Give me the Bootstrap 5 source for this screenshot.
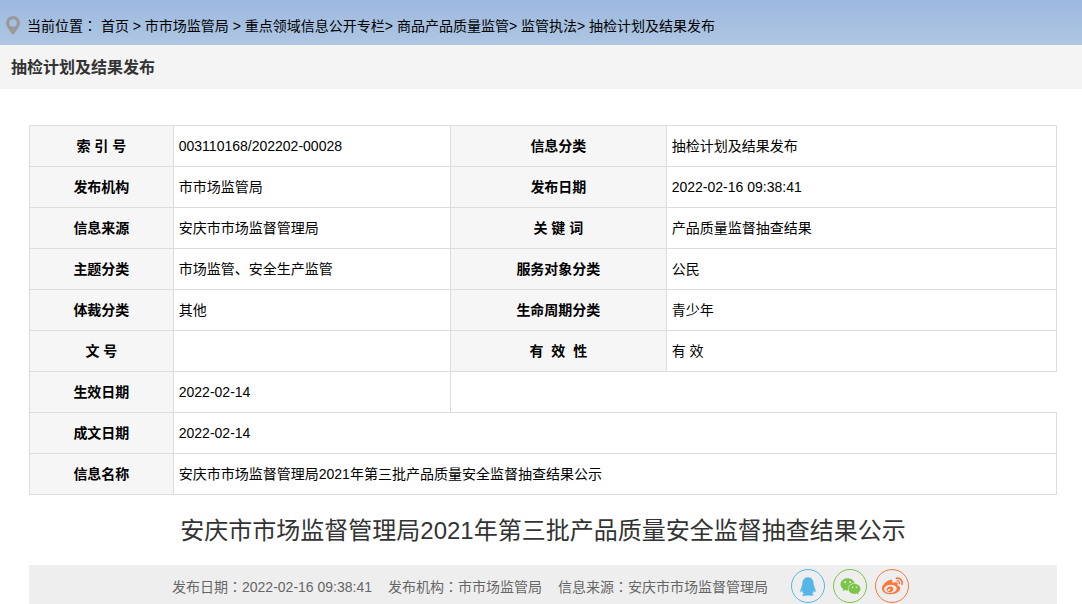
<!DOCTYPE html>
<html lang="zh-CN">
<head>
<meta charset="utf-8">
<meta name="viewport" content="width=device-width, initial-scale=1">
<title>抽检计划及结果发布</title>
<link href="https://cdn.jsdelivr.net/npm/bootstrap@5.3.0/dist/css/bootstrap.min.css" rel="stylesheet">
<style>
  body { font: 14px/24px "Liberation Sans", "Noto Sans CJK SC", sans-serif; color: #000; background: #fff; }
  a { color: inherit; text-decoration: none; }
  a:hover { text-decoration: underline; }
  .crumb-bar { min-height: 45px; padding: 5px 6px 0; gap: 7px; background: linear-gradient(#9db9df, #aec6e2); }
  .section-bar { min-height: 44px; padding: 2px 11px 0; background: #f4f4f4; }
  .section-bar h1 { font-size: 16px; line-height: 24px; color: #333; }
  .mid-colon { font-family: "Noto Sans CJK TC", sans-serif; }
  main { padding: 36px 25px 0 29px; }
  .info-table { table-layout: fixed; border-collapse: collapse; }
  .info-table th, .info-table td { height: 41px; padding: 0 5px; border: 1px solid #ddd; line-height: 24px; }
  .info-table th { background: #f6f6f6; text-align: center; }
  .info-table td.no-edge { border-right: 0; }
  .col-a { width: 14%; } .col-b { width: 27%; } .col-c { width: 21%; } .col-d { width: 38%; }
  .article-title { font-size: 24px; line-height: 36px; color: #333; margin: 18px 0 16px; }
  .meta-bar { background: #eee; color: #666; padding: 4px 5px 1px 0; column-gap: 23px; }
  .meta-list { column-gap: 16px; }
  .share-btn { width: 34px; height: 34px; border: 1px solid; }
  .share-btn svg { fill: currentColor; }
  .qq { color: #56b6e7; } .wechat { color: #7bc549; } .weibo { color: #ff763b; }
</style>
</head>
<body>
<nav class="crumb-bar d-flex align-items-center" aria-label="当前位置">
  <svg class="flex-shrink-0" width="14" height="19" viewBox="0 0 14 19" aria-hidden="true"><path fill="#999" fill-rule="evenodd" d="M7 0a7 7 0 0 1 7 7c0 3-3 7-7 12C3 14 0 10 0 7a7 7 0 0 1 7-7zm0 3.200a3.800 3.800 0 1 0 0 7.600 3.800 3.800 0 0 0 0-7.600z"/></svg>
  <div>当前位置<span class="mid-colon" lang="zh-TW">：</span> <a href="#">首页</a> &gt; <a href="#">市市场监管局</a> &gt; <a href="#">重点领域信息公开专栏</a>&gt; <a href="#">商品产品质量监管</a>&gt; <a href="#">监管执法</a>&gt; <a href="#">抽检计划及结果发布</a></div>
</nav>
<header class="section-bar d-flex align-items-center">
  <h1 class="fw-bold m-0">抽检计划及结果发布</h1>
</header>
<main>
  <table class="info-table w-100">
    <colgroup><col class="col-a"><col class="col-b"><col class="col-c"><col class="col-d"></colgroup>
    <tbody>
      <tr><th scope="row">索 引 号</th><td>003110168/202202-00028</td><th scope="row">信息分类</th><td>抽检计划及结果发布</td></tr>
      <tr><th scope="row">发布机构</th><td>市市场监管局</td><th scope="row">发布日期</th><td>2022-02-16 09:38:41</td></tr>
      <tr><th scope="row">信息来源</th><td>安庆市市场监督管理局</td><th scope="row">关 键 词</th><td>产品质量监督抽查结果</td></tr>
      <tr><th scope="row">主题分类</th><td>市场监管、安全生产监管</td><th scope="row">服务对象分类</th><td>公民</td></tr>
      <tr><th scope="row">体裁分类</th><td>其他</td><th scope="row">生命周期分类</th><td>青少年</td></tr>
      <tr><th scope="row">文 号</th><td></td><th scope="row">有&nbsp; 效&nbsp; 性</th><td>有 效</td></tr>
      <tr><th scope="row">生效日期</th><td>2022-02-14</td><td class="no-edge" colspan="2"></td></tr>
      <tr><th scope="row">成文日期</th><td colspan="3">2022-02-14</td></tr>
      <tr><th scope="row">信息名称</th><td colspan="3">安庆市市场监督管理局2021年第三批产品质量安全监督抽查结果公示</td></tr>
    </tbody>
  </table>
  <h2 class="article-title fw-normal text-center">安庆市市场监督管理局2021年第三批产品质量安全监督抽查结果公示</h2>
  <div class="meta-bar d-flex flex-wrap justify-content-center align-items-center">
    <div class="meta-list d-flex flex-wrap">
      <span>发布日期<span class="mid-colon" lang="zh-TW">：</span>2022-02-16 09:38:41</span>
      <span>发布机构<span class="mid-colon" lang="zh-TW">：</span>市市场监管局</span>
      <span>信息来源<span class="mid-colon" lang="zh-TW">：</span>安庆市市场监督管理局</span>
    </div>
    <div class="d-flex gap-2">
      <a href="#" class="share-btn qq rounded-circle d-flex align-items-center justify-content-center" aria-label="QQ"><svg width="16" height="19" viewBox="0 0 448 512"><path d="M433.754 420.445c-11.526 1.393-44.86-52.741-44.86-52.741 0 31.345-16.136 72.247-51.051 101.786 16.842 5.192 54.843 19.167 45.803 34.421-7.316 12.343-125.51 7.881-159.632 4.037-34.122 3.844-152.316 8.306-159.632-4.037-9.045-15.25 28.918-29.214 45.783-34.415-34.92-29.539-51.059-70.445-51.059-101.792 0 0-33.334 54.134-44.859 52.741-5.37-.65-12.424-29.644 9.347-99.704 10.261-33.024 21.995-60.478 40.144-105.779C60.683 98.063 108.982.006 224 0c113.737.006 163.156 96.133 160.264 214.963 18.118 45.223 29.912 72.85 40.144 105.778 21.768 70.06 14.716 99.053 9.346 99.704z"/></svg></a>
      <a href="#" class="share-btn wechat rounded-circle d-flex align-items-center justify-content-center" aria-label="微信"><svg width="21" height="19" viewBox="0 0 576 512"><path d="M385.2 167.6c6.4 0 12.6.3 18.8 1.1C387.4 90.3 303.3 32 207.7 32 100.5 32 13 104.8 13 197.4c0 53.4 29.3 97.5 77.9 131.600l-19.3 58.6 68-34.1c24.4 4.8 43.8 9.7 68.2 9.7 6.2 0 12.1-.3 18.3-.8-4-12.9-6.2-26.6-6.2-40.8-.1-84.9 72.9-154 165.3-154zm-104.500-52.9c14.5 0 24.2 9.7 24.2 24.4 0 14.5-9.7 24.2-24.2 24.2-14.8 0-29.3-9.7-29.3-24.2.1-14.7 14.6-24.4 29.3-24.4zm-136.400 48.6c-14.5 0-29.3-9.7-29.3-24.2 0-14.8 14.8-24.4 29.3-24.4 14.8 0 24.4 9.7 24.4 24.4 0 14.6-9.6 24.2-24.4 24.2zM563 319.4c0-77.9-77.9-141.3-165.4-141.3-92.7 0-165.4 63.4-165.4 141.3S305 460.7 397.6 460.7c19.3 0 38.9-5.1 58.6-9.9l53.4 29.3-14.8-48.6C534 402.1 563 363.2 563 319.4zm-219.1-24.5c-9.7 0-19.3-9.7-19.3-19.6 0-9.7 9.7-19.3 19.3-19.3 14.8 0 24.4 9.7 24.4 19.3 0 10-9.7 19.6-24.4 19.6zm107.1 0c-9.7 0-19.3-9.7-19.3-19.6 0-9.7 9.7-19.3 19.3-19.3 14.5 0 24.4 9.7 24.4 19.3.1 10-9.9 19.6-24.4 19.6z"/></svg></a>
      <a href="#" class="share-btn weibo rounded-circle d-flex align-items-center justify-content-center" aria-label="微博"><svg width="21" height="21" viewBox="0 0 512 512"><path d="M407 177.6c7.6-24-13.4-46.8-37.4-41.7-22 4.8-28.8-28.1-7.1-32.8 50.1-10.9 92.3 37.1 76.5 84.8-6.8 21.2-38.8 10.8-32-10.3zM214.8 446.7C108.5 446.7 0 395.3 0 310.4c0-44.3 28-95.4 76.3-143.7C176 67 279.5 65.8 249.9 161c-4 13.1 12.3 5.7 12.3 6 79.5-33.6 140.5-16.8 114 51.4-3.7 9.4 1.1 10.9 8.3 13.1 135.7 42.3 34.8 215.2-169.7 215.2zm143.7-146.3c-5.4-55.7-78.5-94-163.4-85.7-84.8 8.6-148.8 60.3-143.4 116s78.5 94 163.4 85.7c84.8-8.6 148.8-60.3 143.4-116zM347.9 35.100c-25.9 5.6-16.8 43.7 8.3 38.3 72.3-15.2 134.8 52.8 111.7 124-7.4 24.2 29.1 37 37.4 12 31.9-99.8-55.1-195.9-157.4-174.3zm-78.5 311c-17.1 38.8-66.8 60-109.1 46.3-40.8-13.1-58-53.4-40.3-89.7 17.7-35.4 63.1-55.4 103.4-45.1 42 10.8 63.1 50.2 46 88.5zm-86.3-30c-12.9-5.4-30 .3-38 12.9-8.3 12.9-4.3 28 8.6 34 13.1 6 30.8.3 39.1-12.9 8-13.1 3.7-28.3-9.7-34zm32.6-13.4c-5.1-1.7-11.4.6-14.3 5.4-2.9 5.1-1.4 10.6 3.7 12.9 5.1 2 11.7-.3 14.6-5.4 2.8-5.2 1.1-10.9-4-12.9z"/></svg></a>
    </div>
  </div>
</main>
<script src="https://cdn.jsdelivr.net/npm/bootstrap@5.3.0/dist/js/bootstrap.bundle.min.js"></script>
</body>
</html>
